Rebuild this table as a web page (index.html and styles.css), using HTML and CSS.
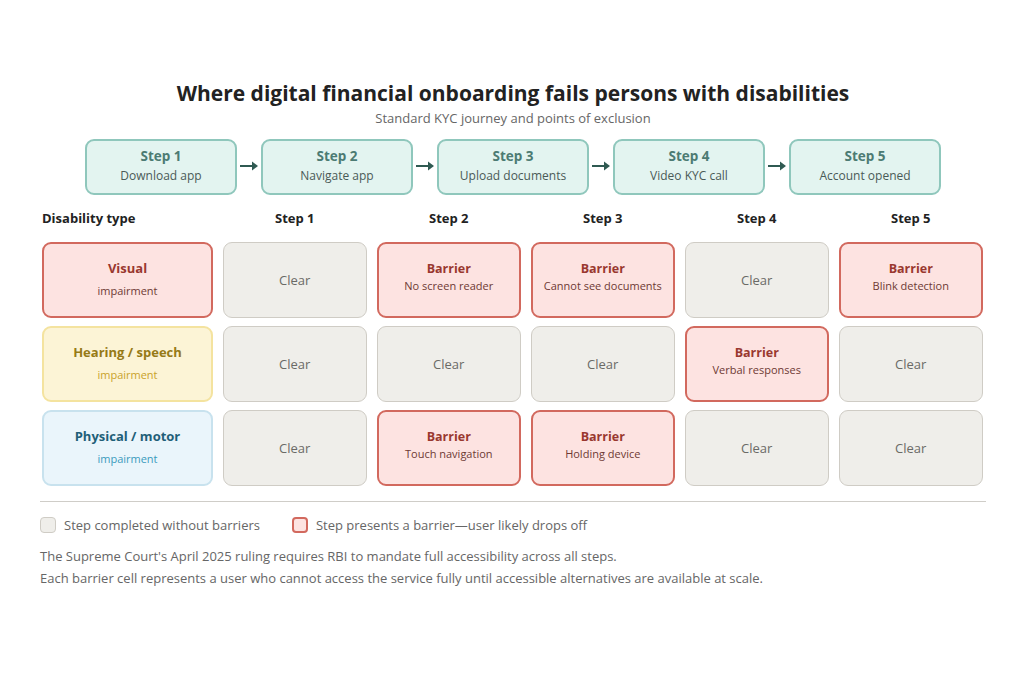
FILE: index.html
```html
<!DOCTYPE html>
<html lang="en">
<head>
<meta charset="utf-8">
<title>Digital onboarding barriers</title>
<link rel="stylesheet" href="styles.css">
</head>
<body>
<main class="page">
  <h1 class="title">Where digital financial onboarding fails persons with disabilities</h1>
  <p class="subtitle">Standard KYC journey and points of exclusion</p>

  <div class="journey">
    <div class="step"><span class="step-name">Step 1</span><span class="step-desc">Download app</span></div>
    <svg class="arrow" width="24" height="12" viewBox="0 0 24 12"><line x1="3" y1="6" x2="16" y2="6"/><polygon points="15,1.5 21,6 15,10.5"/></svg>
    <div class="step"><span class="step-name">Step 2</span><span class="step-desc">Navigate app</span></div>
    <svg class="arrow" width="24" height="12" viewBox="0 0 24 12"><line x1="3" y1="6" x2="16" y2="6"/><polygon points="15,1.5 21,6 15,10.5"/></svg>
    <div class="step"><span class="step-name">Step 3</span><span class="step-desc">Upload documents</span></div>
    <svg class="arrow" width="24" height="12" viewBox="0 0 24 12"><line x1="3" y1="6" x2="16" y2="6"/><polygon points="15,1.5 21,6 15,10.5"/></svg>
    <div class="step"><span class="step-name">Step 4</span><span class="step-desc">Video KYC call</span></div>
    <svg class="arrow" width="24" height="12" viewBox="0 0 24 12"><line x1="3" y1="6" x2="16" y2="6"/><polygon points="15,1.5 21,6 15,10.5"/></svg>
    <div class="step"><span class="step-name">Step 5</span><span class="step-desc">Account opened</span></div>
  </div>

  <div class="matrix">
    <div class="head head-left">Disability type</div>
    <div class="head">Step 1</div>
    <div class="head">Step 2</div>
    <div class="head">Step 3</div>
    <div class="head">Step 4</div>
    <div class="head">Step 5</div>

    <div class="cell cat cat-visual"><span class="cat-name">Visual</span><span class="cat-sub">impairment</span></div>
    <div class="cell clear">Clear</div>
    <div class="cell barrier"><span class="b-name">Barrier</span><span class="b-sub">No screen reader</span></div>
    <div class="cell barrier"><span class="b-name">Barrier</span><span class="b-sub">Cannot see documents</span></div>
    <div class="cell clear">Clear</div>
    <div class="cell barrier"><span class="b-name">Barrier</span><span class="b-sub">Blink detection</span></div>

    <div class="cell cat cat-hearing"><span class="cat-name">Hearing / speech</span><span class="cat-sub">impairment</span></div>
    <div class="cell clear">Clear</div>
    <div class="cell clear">Clear</div>
    <div class="cell clear">Clear</div>
    <div class="cell barrier"><span class="b-name">Barrier</span><span class="b-sub">Verbal responses</span></div>
    <div class="cell clear">Clear</div>

    <div class="cell cat cat-physical"><span class="cat-name">Physical / motor</span><span class="cat-sub">impairment</span></div>
    <div class="cell clear">Clear</div>
    <div class="cell barrier"><span class="b-name">Barrier</span><span class="b-sub">Touch navigation</span></div>
    <div class="cell barrier"><span class="b-name">Barrier</span><span class="b-sub">Holding device</span></div>
    <div class="cell clear">Clear</div>
    <div class="cell clear">Clear</div>
  </div>

  <hr class="divider">

  <div class="legend">
    <span class="legend-item"><span class="swatch swatch-clear"></span>Step completed without barriers</span>
    <span class="legend-item"><span class="swatch swatch-barrier"></span>Step presents a barrier—user likely drops off</span>
  </div>

  <p class="note note-first">The Supreme Court's April 2025 ruling requires RBI to mandate full accessibility across all steps.</p>
  <p class="note">Each barrier cell represents a user who cannot access the service fully until accessible alternatives are available at scale.</p>
</main>
</body>
</html>
```

FILE: styles.css
```css
* { box-sizing: border-box; }

html, body {
  margin: 0;
  padding: 0;
  background: #ffffff;
}

body {
  font-family: "Open Sans", "Liberation Sans", sans-serif;
  color: #333;
}

.page {
  width: 946px;
  margin: 0 0 0 40px;
  padding-top: 81px;
}

.title {
  margin: 0;
  font-size: 21px;
  line-height: 24px;
  font-weight: 700;
  color: #222;
  text-align: center;
}

.subtitle {
  margin: 4px 0 0;
  font-size: 13px;
  line-height: 18px;
  color: #666;
  text-align: center;
}

.journey {
  margin-top: 12px;
  display: flex;
  justify-content: center;
  align-items: center;
}

.step {
  width: 152px;
  height: 56px;
  border: 2px solid #8fc7bc;
  border-radius: 9px;
  background: #e3f4f0;
  display: flex;
  flex-direction: column;
  align-items: center;
  justify-content: center;
  padding-bottom: 2px;
}

.step-name {
  font-size: 13.5px;
  line-height: 20px;
  font-weight: 700;
  color: #4c7b73;
}

.step-desc {
  font-size: 12px;
  line-height: 20px;
  color: #4a5a57;
}

.arrow {
  flex: none;
  margin: 0 0 2px;
}
.arrow line { stroke: #2f5a52; stroke-width: 2; }
.arrow polygon { fill: #2f5a52; }

.matrix {
  margin-top: 13px;
  margin-left: 2px;
  display: grid;
  grid-template-columns: 171px repeat(5, 144.5px);
  column-gap: 9.5px;
  row-gap: 8px;
  grid-template-rows: 26px repeat(3, 76px);
  width: 941px;
}

.head {
  font-size: 13px;
  line-height: 20px;
  font-weight: 700;
  color: #222;
  text-align: center;
}
.head-left { text-align: left; }

.cell {
  border-radius: 9px;
  display: flex;
  flex-direction: column;
  align-items: center;
  justify-content: center;
  text-align: center;
}

.clear {
  background: #efeeea;
  border: 1px solid #cfccc5;
  color: #6a6a66;
  font-size: 13px;
}

.barrier {
  background: #fde3e1;
  border: 2px solid #d2695e;
  padding-bottom: 6px;
}

.b-name {
  font-size: 12.5px;
  line-height: 17px;
  font-weight: 700;
  color: #99382f;
}

.b-sub {
  font-size: 11px;
  line-height: 17px;
  color: #6e3a34;
}

.cat {
  border-width: 2px;
  border-style: solid;
  padding-bottom: 2px;
}

.cat-name {
  font-size: 13px;
  line-height: 18px;
  font-weight: 700;
}

.cat-sub {
  font-size: 11px;
  line-height: 18px;
  margin-top: 5px;
}

.cat-visual { background: #fde3e1; border-color: #d2695e; }
.cat-visual .cat-name { color: #99382f; }
.cat-visual .cat-sub { color: #6e3a34; }

.cat-hearing { background: #fcf4d6; border-color: #f4e39f; }
.cat-hearing .cat-name { color: #967a17; }
.cat-hearing .cat-sub { color: #c9a22a; }

.cat-physical { background: #eaf5fb; border-color: #c8e2ee; }
.cat-physical .cat-name { color: #1f5f78; }
.cat-physical .cat-sub { color: #3b9bbd; }

.divider {
  margin: 15px 0 0;
  border: 0;
  border-top: 1px solid #cfcdc8;
  height: 0;
}

.legend {
  margin-top: 13px;
  display: flex;
  align-items: center;
  gap: 32px;
  font-size: 13px;
  line-height: 20px;
  color: #666;
}

.legend-item {
  display: flex;
  align-items: center;
  gap: 8px;
}

.swatch {
  width: 16px;
  height: 16px;
  border-radius: 4px;
  flex: none;
}
.swatch-clear { background: #efeeea; border: 1px solid #cfccc5; }
.swatch-barrier { background: #fde3e1; border: 2px solid #d2695e; }

.note {
  margin: 0;
  font-size: 13px;
  line-height: 22px;
  color: #666;
}
.note-first { margin-top: 10px; }
```
